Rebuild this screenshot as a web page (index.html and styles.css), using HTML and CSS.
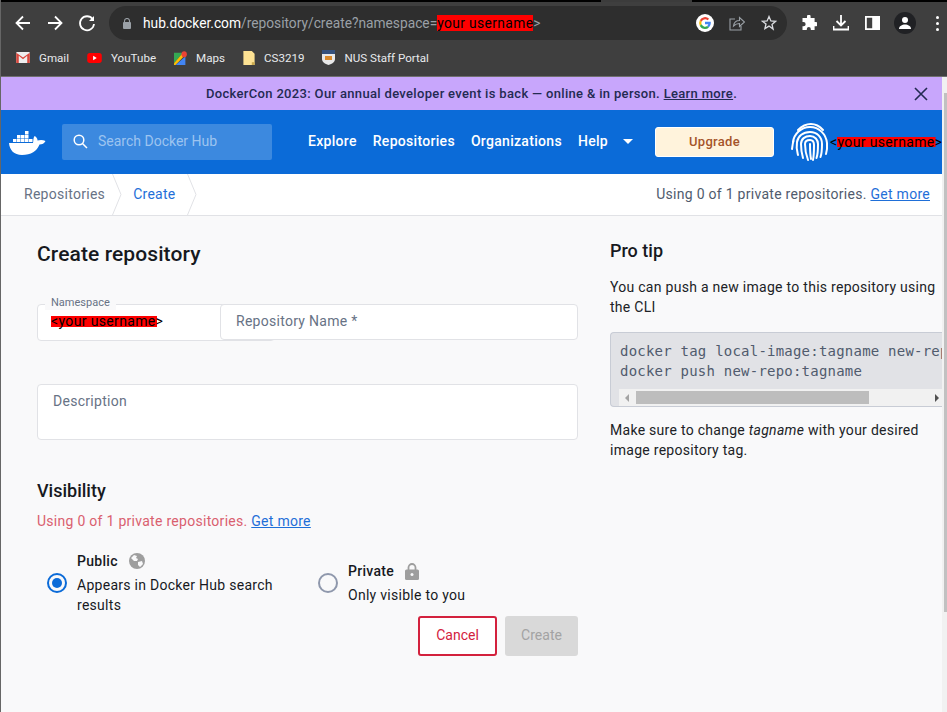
FILE: index.html
```html
<!DOCTYPE html>
<html lang="en">
<head>
    <meta charset="UTF-8">
    <title>Create repository</title>
    <link rel="stylesheet" href="styles.css">
</head>
<body>
<div class="window">
    <div class="tabstrip">
        <span class="tab-gap"></span>
    </div>
    <!-- Browser toolbar -->
    <div class="toolbar">
        <svg class="nav-icon" width="20" height="20" viewBox="0 0 20 20"><path d="M17 10H4M10 3.500 3.500 10l6.500 6.500" fill="none" stroke="#fff" stroke-width="1.800"/></svg>
        <svg class="nav-icon" width="20" height="20" viewBox="0 0 20 20"><path d="M3 10h13M10 3.500 16.500 10 10 16.500" fill="none" stroke="#fff" stroke-width="1.800"/></svg>
        <svg class="nav-icon" width="20" height="20" viewBox="0 0 20 20"><path d="M15.600 6A7 7 0 1 0 17 11" fill="none" stroke="#fff" stroke-width="1.800"/><path d="M17 3v5h-5z" fill="#fff"/></svg>
        <div class="omnibox">
            <svg class="lock" width="8" height="11" viewBox="0 0 8 11"><path d="M1.500 4.500V3a2.500 2.500 0 0 1 5 0v1.500" fill="none" stroke="#9aa0a6" stroke-width="1.100"/><rect y="4" width="8" height="7" rx="1" fill="#9aa0a6"/></svg>
            <span class="url"><span class="host">hub.docker.com</span>/repository/create?namespace=<span class="url-name">your username</span>&gt;</span>
            <svg class="google" width="18" height="18" viewBox="0 0 18 18"><circle cx="9" cy="9" r="9" fill="#fff"/><path d="M9 5.200a3.800 3.800 0 0 1 2.600 1l1.500-1.500A5.900 5.900 0 0 0 3.800 6.300l1.800 1.400A3.600 3.600 0 0 1 9 5.200z" fill="#ea4335"/><path d="M14.800 9.100l-.1-1.300H9v2.400h3.300a2.800 2.800 0 0 1-1.200 1.800l1.800 1.400a5.600 5.600 0 0 0 1.900-4.300z" fill="#4285f4"/><path d="M5.600 10.300a3.600 3.600 0 0 1 0-2.600L3.800 6.300a5.900 5.900 0 0 0 0 5.400z" fill="#fbbc05"/><path d="M9 14.900a5.600 5.600 0 0 0 3.900-1.500l-1.800-1.400A3.700 3.700 0 0 1 5.600 10.300l-1.800 1.400A5.900 5.900 0 0 0 9 14.900z" fill="#34a853"/></svg>
            <svg class="omni-icon" width="16" height="16" viewBox="0 0 16 16"><path d="M6 4H1v11h11v-4" fill="none" stroke="#9aa0a6" stroke-width="1.100"/><path d="M4.500 11C5 7.500 7.500 5.500 10.500 5.500V2.500L15.500 7l-5 4.500V8.500C8 8.500 6 9.500 4.500 11z" fill="none" stroke="#9aa0a6" stroke-width="1.100"/></svg>
            <svg class="omni-star" width="16" height="16" viewBox="0 0 16 16"><path d="M8 1.500l1.900 4.400 4.700.4-3.600 3.100 1.100 4.700L8 11.100l-4.100 2.500L5 8.900 1.400 6.300l4.700-.4z" fill="none" stroke="#dadce0" stroke-width="1.300"/></svg>
        </div>
        <svg class="tool-icon" width="16" height="16" viewBox="0 0 16 16"><path d="M6 1.500a1.800 1.800 0 0 1 3.600 0V3h4v4h1a2 2 0 0 1 0 4.300h-1V15H9.800v-1a2 2 0 0 0-4 0v1H1.500v-3.700h1a2 2 0 0 0 0-4.300h-1V3H6z" fill="#fff"/></svg>
        <svg class="tool-icon" width="16" height="16" viewBox="0 0 16 16"><path d="M8 0v10M3.500 6 8 10.500 12.500 6" fill="none" stroke="#fff" stroke-width="1.800"/><path d="M.5 11v3.500h15V11" fill="none" stroke="#fff" stroke-width="1.800"/></svg>
        <svg class="tool-icon" width="15" height="14" viewBox="0 0 15 14"><path d="M0 0h15v14H0zM1.800 1.800v10.400h5.400V1.800z" fill="#fff" fill-rule="evenodd"/></svg>
        <span class="avatar"><svg width="14" height="14" viewBox="0 0 14 14"><circle cx="7" cy="4" r="3" fill="#fff"/><path d="M1 13c0-3 3-4.500 6-4.500s6 1.500 6 4.500z" fill="#fff"/></svg></span>
        <span class="kebab"><i></i><i></i><i></i></span>
    </div>
    <!-- Bookmarks -->
    <div class="bookmarks">
        <span class="bookmark">
            <svg width="14" height="11" viewBox="0 0 16 13"><rect width="16" height="13" rx="1" fill="#eee"/><path d="M0 1v12h3V4.500l5 4 5-4V13h3V1L8 6.500z" fill="#d9473c"/></svg>
            Gmail
        </span>
        <span class="bookmark">
            <svg width="15" height="10" viewBox="0 0 16 11"><rect width="16" height="11" rx="3" fill="#f00"/><path d="M6.500 3v5l4-2.500z" fill="#fff"/></svg>
            YouTube
        </span>
        <span class="bookmark">
            <svg width="13" height="14" viewBox="0 0 16 15" preserveAspectRatio="none"><path d="M0 2h11L0 13z" fill="#34a853"/><path d="M11 2 0 13v2h2L14 4z" fill="#fbbc05"/><path d="M2 15h12V6z" fill="#4285f4"/><circle cx="12.500" cy="3.500" r="3.300" fill="#ea4335"/></svg>
            Maps
        </span>
        <span class="bookmark">
            <svg width="12" height="14" viewBox="0 0 12 15"><path d="M0 0h9l3 3v12H0z" fill="#fde293"/><path d="M9 12h3v3H9z" fill="#c9a94f"/></svg>
            CS3219
        </span>
        <span class="bookmark">
            <svg width="13" height="15" viewBox="0 0 13 15"><path d="M0 0h13v9c0 3-3 5-6.500 6C3 14 0 12 0 9z" fill="#e8e8e8"/><path d="M0 0h13v4H0z" fill="#34507c"/><path d="M3 6h7v4H3z" fill="#d9892b"/></svg>
            NUS Staff Portal
        </span>
    </div>
    <div class="viewport">
        <div class="page">
            <div class="banner">
                <p>DockerCon 2023: Our annual developer event is back — online &amp; in person. <a href="#">Learn more</a>.</p>
                <svg class="banner-close" width="14" height="14" viewBox="0 0 14 14"><path d="M1 1l12 12M13 1 1 13" stroke="#232a52" stroke-width="1.600"/></svg>
            </div>
            <!-- Docker Hub nav -->
            <nav class="hub-nav">
                <svg class="whale" width="37" height="25" viewBox="0 0 37 25"><path d="M8 5h3.500v3.500H8zM12 5h3.500v3.500H12zM16 5h3.500v3.500H16zM16 1h3.500v3.500H16z" fill="#fff"/><path d="M4 9h3.500v3H4zM8 9h3.500v3H8zM12 9h3.500v3H12zM16 9h3.500v3H16zM20 9h3.500v3H20z" fill="#fff"/><path d="M0 13h24c.5-2 0-5 1.500-7 2 1 3 2.500 3 4.500 2-.5 5-1 8 .5-1 2.500-3.500 3.500-6 3.500C28 21 22 25 13 25 5 25 .5 20 0 13z" fill="#fff"/></svg>
                <div class="hub-search">
                    <svg width="15" height="15" viewBox="0 0 15 15"><circle cx="6" cy="6" r="4.800" fill="none" stroke="#fff" stroke-width="1.500"/><path d="M9.500 9.500l4.500 4.500" stroke="#fff" stroke-width="1.500"/></svg>
                    <span>Search Docker Hub</span>
                </div>
                <div class="hub-links">
                    <a href="#">Explore</a>
                    <a href="#">Repositories</a>
                    <a href="#">Organizations</a>
                    <a href="#">Help</a>
                    <span class="caret"></span>
                </div>
                <button class="upgrade">Upgrade</button>
                <svg class="fingerprint" width="40" height="40" viewBox="0 0 40 40" fill="none" stroke="#fff" stroke-width="2" stroke-linecap="round"><path d="M8 8C16 0 26 0 33 8"/><path d="M3 20C4 12 11 5 20 5c9 0 16 7 17 16 .3 4 0 8-1 11"/><path d="M2 27c.5-3 .500-5 1.500-8M8 33c-1-4-2-7-1-13C8 14 13 10 20 10s12 5 12 12c0 5 0 9-1.500 13"/><path d="M13 36c-1.500-5-2-9-2-14 0-5 4-8 9-8s8 4 8 8c0 6 0 10-1.500 14"/><path d="M18 38c-2-5-3-10-3-16 0-3 2-4 5-4s4 2 4 5c0 6 0 10-1 15"/><path d="M20 22c0 6 0 10 1 15"/></svg>
                <span class="hub-user">&lt;your username&gt;</span>
            </nav>
            <!-- Breadcrumb -->
            <div class="crumbs">
                <span class="crumb">Repositories</span>
                <svg class="chevron" width="10" height="41" viewBox="0 0 10 41"><path d="M.5 0 9 20.500.5 41" fill="none" stroke="#e1e2e6"/></svg>
                <span class="crumb crumb-active">Create</span>
                <svg class="chevron" width="10" height="41" viewBox="0 0 10 41"><path d="M.5 0 9 20.500.5 41" fill="none" stroke="#e1e2e6"/></svg>
                <span class="usage">Using 0 of 1 private repositories. <a href="#">Get more</a></span>
            </div>
            <main class="content">
                <section class="form-col">
                    <h1>Create repository</h1>
                    <div class="name-row">
                        <div class="field namespace">
                            <label>Namespace</label>
                            <span class="redact">&lt;your username&gt;</span>
                        </div>
                        <div class="field repo-name">Repository Name *</div>
                    </div>
                    <div class="field description">Description</div>
                    <h2>Visibility</h2>
                    <p class="vis-usage">Using 0 of 1 private repositories. <a href="#">Get more</a></p>
                    <div class="vis-options">
                        <div class="vis-option vis-public">
                            <span class="radio radio-on"></span>
                            <div>
                                <div class="vis-title">Public
                                    <svg width="16" height="16" viewBox="0 0 16 16"><circle cx="8" cy="8" r="8" fill="#9e9e9e"/><path d="M2 5l3-3 3 1-1 2 2 1-1 2-3 0-2-2zM9 9l4-1 1 3-3 3-2-2z" fill="#f9f9fa"/></svg>
                                </div>
                                <div class="vis-text">Appears in Docker Hub search results</div>
                            </div>
                        </div>
                        <div class="vis-option vis-private">
                            <span class="radio"></span>
                            <div>
                                <div class="vis-title">Private
                                    <svg width="14" height="17" viewBox="0 0 14 17"><path d="M3.500 7V4.500a3.500 3.500 0 0 1 7 0V7" fill="none" stroke="#9e9e9e" stroke-width="1.800"/><rect y="6.500" width="14" height="10.500" rx="1.500" fill="#9e9e9e"/><circle cx="7" cy="11.500" r="1.500" fill="#f9f9fa"/></svg>
                                </div>
                                <div class="vis-text">Only visible to you</div>
                            </div>
                        </div>
                    </div>
                    <div class="actions">
                        <button class="btn btn-cancel">Cancel</button>
                        <button class="btn btn-create">Create</button>
                    </div>
                </section>
                <aside class="tip-col">
                    <h3>Pro tip</h3>
                    <p>You can push a new image to this repository using the CLI</p>
                    <div class="code-box">
                        <pre>docker tag local-image:tagname new-repo:tagname
docker push new-repo:tagname</pre>
                        <div class="code-scroll">
                            <span class="arrow-left"></span>
                            <span class="code-thumb"></span>
                            <span class="arrow-right"></span>
                        </div>
                    </div>
                    <p class="tip-after">Make sure to change <em>tagname</em> with your desired image repository tag.</p>
                </aside>
            </main>
        </div>
        <div class="page-scrollbar"><span></span></div>
    </div>
</div>
</body>
</html>
```

FILE: styles.css
```css
* {
    box-sizing: border-box;
}
html, body {
    margin: 0;
    height: 100%;
    overflow: hidden;
}
body {
    font-family: Roboto, Arial, sans-serif;
    background-color: #f9f9fa;
}
a {
    color: #1f6fd8;
}
.window {
    width: 947px;
    height: 712px;
    display: flex;
    flex-direction: column;
    border-left: 1px solid #666;
}

/* browser chrome */
.tabstrip {
    height: 2px;
    background-color: #000;
    position: relative;
}
.tab-gap {
    position: absolute;
    left: 600px;
    width: 91px;
    top: 0;
    height: 2px;
    background-color: #3c3c3c;
}
.toolbar {
    height: 42px;
    background-color: #3f3f3f;
    display: flex;
    align-items: center;
    padding-left: 12px;
}
.nav-icon {
    margin-right: 12px;
}
.omnibox {
    width: 678px;
    height: 34px;
    margin-right: -2px;
    border-radius: 17px;
    background-color: #2e2e2e;
    display: flex;
    align-items: center;
    padding-left: 14px;
    padding-right: 10px;
}
.url {
    margin-left: 12px;
    font-size: 13.75px;
    color: #9aa0a6;
    flex: 1;
    white-space: nowrap;
}
.host {
    color: #fff;
}
.url-name {
    background-color: #f00;
    color: #000;
    letter-spacing: .4px;
}
.google {
    margin-right: 15px;
}
.omni-icon {
    margin-right: 16px;
}
.tool-icon {
    margin-left: 16px;
}
.avatar {
    width: 22px;
    height: 22px;
    margin-left: 14px;
    border-radius: 50%;
    background-color: #202124;
    display: flex;
    align-items: center;
    justify-content: center;
}
.kebab {
    display: flex;
    flex-direction: column;
    gap: 3px;
    margin-left: 20px;
}
.kebab i {
    width: 3px;
    height: 3px;
    background-color: #fff;
    border-radius: 50%;
}
.bookmarks {
    height: 33px;
    background-color: #3f3f3f;
    border-bottom: 1px solid #6f6f6f;
    display: flex;
    align-items: center;
    padding-left: 15px;
    padding-bottom: 5px;
    color: #e8eaed;
    font-size: 11.6px;
    gap: 18px;
}
.bookmark {
    display: flex;
    align-items: center;
    gap: 9px;
}

/* page */
.viewport {
    flex: 1;
    min-height: 0;
    display: flex;
}
.page {
    flex: 1;
    min-width: 0;
    display: flex;
    flex-direction: column;
    background-color: #f9f9fa;
}
.banner {
    height: 33px;
    background-color: #c8a6fc;
    color: #232a52;
    font-size: 13px;
    font-weight: 500;
    letter-spacing: .33px;
    display: flex;
    align-items: center;
    justify-content: center;
    position: relative;
}
.banner p {
    margin: 0;
}
.banner a {
    color: #232a52;
}
.banner-close {
    position: absolute;
    right: 14px;
    top: 10px;
}
.hub-nav {
    height: 64px;
    background-color: #0b6bd8;
    display: flex;
    align-items: center;
    padding-left: 8px;
}
.whale, .fingerprint {
    flex-shrink: 0;
}
.hub-search {
    width: 210px;
    height: 36px;
    flex-shrink: 0;
    margin-left: 16px;
    background-color: #3c89df;
    border-radius: 2px;
    display: flex;
    align-items: center;
    padding-left: 11px;
    padding-bottom: 2px;
    gap: 10px;
    color: #9cc4f0;
    font-size: 14px;
}
.hub-links {
    display: flex;
    align-items: center;
    gap: 16px;
    margin-left: 36px;
    padding-bottom: 2px;
}
.hub-links a {
    color: #fff;
    font-size: 14px;
    font-weight: 500;
    letter-spacing: .3px;
    text-decoration: none;
}
.caret {
    border-top: 5px solid #fff;
    border-left: 5px solid transparent;
    border-right: 5px solid transparent;
    margin-left: -1px;
}
.upgrade {
    width: 119px;
    height: 30px;
    flex-shrink: 0;
    margin-left: 22px;
    padding-bottom: 2px;
    background-color: #fff3dc;
    border: 1px solid #fff;
    border-radius: 3px;
    color: #a5532a;
    font-family: Roboto, Arial, sans-serif;
    font-size: 13px;
    font-weight: 500;
    letter-spacing: .3px;
}
.fingerprint {
    margin-left: 16px;
}
.hub-user {
    font-size: 14px;
    letter-spacing: .35px;
    color: #000;
    white-space: nowrap;
    background: linear-gradient(#f00, #f00) no-repeat center / 88% 10px;
}
.redact {
    font-size: 14px;
    letter-spacing: .35px;
    color: #000;
    background: linear-gradient(#f00, #f00) no-repeat left center / 95% 11px;
}
.crumbs {
    height: 42px;
    background-color: #fff;
    border-bottom: 1px solid #e1e2e6;
    display: flex;
    align-items: stretch;
    font-size: 14px;
    letter-spacing: .28px;
    color: #677285;
    line-height: 41px;
}
.crumb {
    padding-left: 23px;
    padding-right: 7px;
}
.crumb-active {
    color: #1f6fd8;
    padding-left: 11px;
    padding-right: 11px;
}
.chevron {
    display: block;
}
.usage {
    margin-left: auto;
    padding-right: 12px;
    color: #505b6d;
}

/* main */
.content {
    flex: 1;
    min-height: 0;
    display: flex;
    padding-left: 36px;
    gap: 32px;
    overflow: hidden;
    letter-spacing: .28px;
}
.form-col {
    width: 541px;
    flex-shrink: 0;
}
h1 {
    margin: 24px 0 0;
    font-size: 21px;
    line-height: 28px;
    font-weight: 500;
    letter-spacing: .1px;
    color: #17191e;
}
.name-row {
    display: flex;
    margin-top: 36px;
}
.field {
    background-color: #fff;
    border: 1px solid #e1e2e6;
    border-radius: 4px;
    font-size: 14px;
    color: #677285;
}
.namespace {
    width: 238px;
    height: 37px;
    margin-right: -55px;
    position: relative;
    padding: 8px 13px;
    line-height: 17px;
    white-space: nowrap;
}
.namespace label {
    position: absolute;
    left: 7px;
    top: -9px;
    padding: 0 6px;
    font-size: 11px;
    letter-spacing: 0;
    line-height: 14px;
    background-color: #f9f9fa;
    color: #677285;
}
.repo-name {
    flex: 1;
    height: 36px;
    position: relative;
    padding: 0 15px;
    line-height: 32px;
}
.description {
    height: 56px;
    margin-top: 43px;
    padding: 6px 15px;
    line-height: 20px;
}
h2 {
    margin: 40px 0 0;
    font-size: 18px;
    line-height: 22px;
    font-weight: 500;
    letter-spacing: 0;
    color: #17191e;
}
.vis-usage {
    margin: 9px 0 0;
    font-size: 14px;
    line-height: 20px;
    color: #d9606f;
}
.vis-options {
    display: flex;
    align-items: center;
    margin-top: 20px;
}
.vis-option {
    display: flex;
    align-items: center;
    padding-left: 10px;
    gap: 10px;
    font-size: 14px;
    line-height: 20px;
    color: #17191e;
}
.vis-public {
    width: 271px;
}
.vis-title {
    display: flex;
    align-items: center;
    gap: 11px;
    font-weight: 500;
    height: 20px;
    margin-bottom: 4px;
}
.radio {
    flex-shrink: 0;
    width: 20px;
    height: 20px;
    border-radius: 50%;
    border: 2px solid #8f98ac;
}
.radio-on {
    border-color: #0b6bd8;
    position: relative;
}
.radio-on::after {
    content: "";
    position: absolute;
    left: 3px;
    top: 3px;
    width: 10px;
    height: 10px;
    border-radius: 50%;
    background-color: #0b6bd8;
}
.actions {
    display: flex;
    justify-content: flex-end;
    gap: 8px;
    margin-top: 1px;
}
.btn {
    height: 40px;
    padding-bottom: 3px;
    border-radius: 3px;
    font-family: Roboto, Arial, sans-serif;
    font-size: 14px;
    font-weight: 400;
}
.btn-cancel {
    width: 79px;
    background-color: #fff;
    border: 2px solid #d3213d;
    color: #d3213d;
}
.btn-create {
    width: 73px;
    background-color: #d9d9d9;
    border: none;
    color: #a3a3a3;
}

/* tip column */
.tip-col {
    flex: 1;
    min-width: 0;
    font-size: 14px;
    line-height: 20px;
    color: #202226;
}
h3 {
    margin: 24px 0 0;
    font-size: 18px;
    line-height: 22px;
    font-weight: 500;
    letter-spacing: 0;
    color: #17191e;
}
.tip-col p {
    margin: 15px 0 0;
}
.tip-col .tip-after {
    margin-top: 13px;
}
.code-box {
    margin-top: 15px;
    height: 75px;
    background-color: #e1e2e6;
    border: 1px solid #c8ccd5;
    border-right: none;
    border-radius: 4px 0 0 4px;
    overflow: hidden;
}
.code-box pre {
    margin: 0;
    padding: 8px 0 0 9px;
    font-family: "DejaVu Sans Mono", monospace;
    font-size: 14px;
    letter-spacing: .22px;
    line-height: 20px;
    color: #505b6d;
    height: 56px;
    overflow: hidden;
    white-space: pre;
}
.code-scroll {
    height: 17px;
    margin-left: 8px;
    background-color: #f1f1f1;
    display: flex;
    align-items: center;
    position: relative;
}
.code-thumb {
    position: absolute;
    left: 17px;
    width: 233px;
    height: 13px;
    background-color: #bdbdbd;
}
.arrow-left {
    margin-left: 6px;
    border-right: 4px solid #a3a3a3;
    border-top: 4px solid transparent;
    border-bottom: 4px solid transparent;
}
.arrow-right {
    margin-left: auto;
    margin-right: 3px;
    border-left: 4px solid #505050;
    border-top: 4px solid transparent;
    border-bottom: 4px solid transparent;
}
.page-scrollbar {
    width: 5px;
    flex-shrink: 0;
    background-color: #f1f1f1;
    padding-left: 2px;
    padding-top: 16px;
}
.page-scrollbar span {
    display: block;
    height: 519px;
    background-color: #c1c1c1;
}
```
